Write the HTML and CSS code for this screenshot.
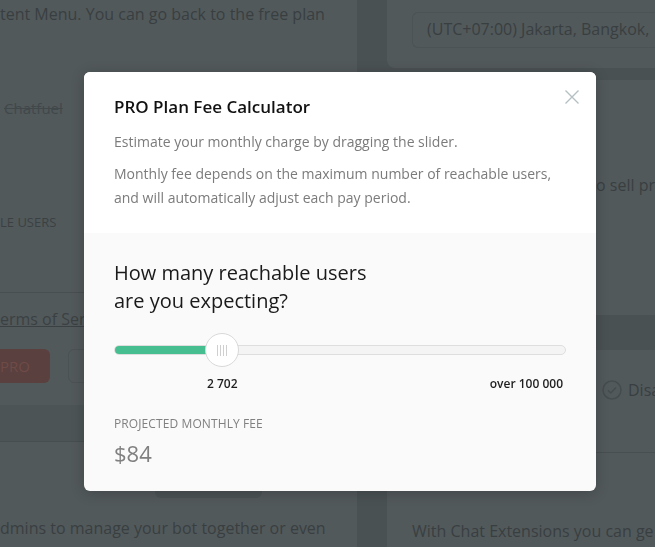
FILE: index.html
```html
<!DOCTYPE html>
<html lang="en">
<head>
  <meta charset="UTF-8">
  <meta name="viewport" content="width=device-width, initial-scale=1.0">
  <link rel="stylesheet" href="styles.css">
</head>
<body>
  <div id="page">
    <div class="col col-left">
      <section class="card card-plan">
        <p class="bg-text">tent Menu. You can go back to the free plan</p>
        <p class="old-brand">Chatfuel</p>
        <p class="caps">LE USERS</p>
        <div class="rule"></div>
        <p class="terms"><u>erms of Servic</u></p>
        <div class="btn-row">
          <span class="btn btn-pro">PRO</span>
          <span class="btn btn-ghost"></span>
        </div>
      </section>
      <div class="band"></div>
      <section class="card card-admins">
        <span class="btn btn-hidden"></span>
        <p class="bg-text">dmins to manage your bot together or even</p>
      </section>
    </div>

    <div class="col col-right">
      <section class="card card-tz">
        <div class="select">(UTC+07:00) Jakarta, Bangkok,</div>
      </section>
      <section class="card card-pay">
        <p class="bg-text sell">o sell pr</p>
      </section>
      <section class="card card-ext">
        <div class="check-row">
          <span class="check">
            <svg width="20" height="20" viewBox="0 0 20 20"><circle cx="10" cy="10" r="9" fill="none" stroke="#454c4e" stroke-width="1.5"/><path d="M6 10.2l2.8 2.8 5.2-5.6" fill="none" stroke="#454c4e" stroke-width="1.5"/></svg>
          </span>
          <span class="bg-text">Disa</span>
        </div>
        <div class="rule"></div>
        <p class="bg-text ext">With Chat Extensions you can ge</p>
      </section>
    </div>
  </div>

  <div id="overlay">
    <div class="modal">
      <div class="modal-head">
        <button class="close" aria-label="Close">
          <svg width="16" height="16" viewBox="0 0 16 16"><path d="M1.5 1.5L14.5 14.5M14.5 1.5L1.5 14.5" stroke="#b5c0c3" stroke-width="1.4"/></svg>
        </button>
        <h2 class="modal-title">PRO Plan Fee Calculator</h2>
        <p class="modal-desc">Estimate your monthly charge by dragging the slider.</p>
        <p class="modal-desc second">Monthly fee depends on the maximum number of reachable users, and will automatically adjust each pay period.</p>
      </div>
      <div class="modal-body">
        <h3 class="question">How many reachable users<br>are you expecting?</h3>
        <div class="slider">
          <div class="track">
            <div class="fill" style="width: 108px"></div>
          </div>
          <div class="thumb" style="left: 91px">
            <span></span><span></span><span></span><span></span>
          </div>
        </div>
        <div class="slider-labels">
          <span class="value" style="left: 93px">2 702</span>
          <span class="max">over 100 000</span>
        </div>
        <p class="fee-label">PROJECTED MONTHLY FEE</p>
        <p class="fee">$84</p>
      </div>
    </div>
  </div>
</body>
</html>
```

FILE: styles.css
```css
body {
  margin: 0;
  background: #4a5153;
  font-family: 'Open Sans', sans-serif;
  overflow: hidden;
}

p {
  margin: 0;
}

#page {
  display: grid;
  grid-template-columns: 357px 268px;
  column-gap: 30px;
  height: 547px;
  overflow: hidden;
}

.col {
  display: flex;
  flex-direction: column;
}

.card {
  background: #52595b;
}

.bg-text {
  color: #393f41;
  font-size: 16px;
  line-height: 24px;
  white-space: nowrap;
}

/* left column */
.card-plan {
  padding-top: 2px;
  height: 403px;
}

.old-brand {
  color: #41484a;
  font-size: 15px;
  line-height: 20px;
  text-decoration: line-through;
  margin: 72px 0 0 4px;
}

.caps {
  color: #3b4143;
  font-size: 13px;
  line-height: 18px;
  margin-top: 95px;
}

.rule {
  height: 1px;
  background: #484f51;
}

.card-plan .rule {
  margin-top: 61px;
}

.terms {
  width: 84px;
  overflow: hidden;
  color: #3b4143;
  font-size: 16px;
  line-height: 24px;
  margin-top: 14px;
  white-space: nowrap;
}

.btn-row {
  display: flex;
  gap: 18px;
  margin-top: 18px;
}

.btn {
  display: block;
  height: 34px;
  border-radius: 6px;
  box-sizing: border-box;
}

.btn-pro {
  width: 50px;
  background: #5a403e;
  color: #6f4b48;
  font-size: 15px;
  line-height: 34px;
  text-align: right;
  padding-right: 25px;
  border-top-left-radius: 0;
  border-bottom-left-radius: 0;
}

.btn-ghost {
  width: 140px;
  border: 1px solid #4b5254;
}

.band {
  height: 36px;
  background: #4d5456;
  border-bottom: 1px solid #474e50;
}

.card-admins {
  flex: 1;
  padding-top: 16px;
}

.btn-hidden {
  width: 107px;
  margin-left: 155px;
  height: 40px;
  background: #4b5254;
}

.card-admins .bg-text {
  margin-top: 18px;
}

/* right column */
.card-tz {
  height: 68px;
  border-bottom-left-radius: 8px;
  padding: 12px 0 0 25px;
  box-sizing: border-box;
}

.select {
  height: 34px;
  border: 1px solid #4c5355;
  border-right: none;
  border-radius: 6px 0 0 6px;
  color: #393f41;
  font-size: 16px;
  line-height: 32px;
  padding-left: 14px;
  white-space: nowrap;
  overflow: hidden;
}

.card-pay {
  margin-top: 12px;
  height: 235px;
  padding: 93px 0 0 209px;
  box-sizing: border-box;
}

.card-ext {
  margin-top: 35px;
  flex: 1;
  padding: 28px 0 0 25px;
}

.check-row {
  display: flex;
  align-items: center;
  gap: 6px;
  margin-left: 190px;
}

.check svg {
  display: block;
}

.card-ext .rule {
  margin: 50px 0 0 18px;
}

.ext {
  margin-top: 66px;
}

/* modal */
#overlay {
  position: fixed;
  inset: 0;
  padding: 72px 0 0 84px;
}

.modal {
  position: relative;
  width: 512px;
  border-radius: 6px;
  overflow: hidden;
  background: #fafafa;
  box-shadow: 0 2px 14px rgba(0, 0, 0, 0.2);
}

.modal-head {
  background: #fff;
  padding: 24px 30px 23px;
}

.close {
  position: absolute;
  top: 17px;
  right: 16px;
  width: 16px;
  height: 16px;
  padding: 0;
  border: none;
  background: none;
  cursor: pointer;
}

.close svg {
  display: block;
}

.modal-title {
  margin: 0;
  font-size: 17px;
  font-weight: 600;
  line-height: 22px;
  color: #111;
}

.modal-desc {
  margin-top: 12px;
  font-size: 14px;
  line-height: 24px;
  color: #7b7b7b;
}

.modal-desc.second {
  margin-top: 8px;
}

.modal-body {
  padding: 26px 30px 23px;
}

.question {
  margin: 0;
  font-size: 20px;
  font-weight: 400;
  line-height: 28px;
  color: #1a1a1a;
}

.slider {
  position: relative;
  height: 34px;
  margin-top: 18px;
}

.track {
  position: absolute;
  left: 0;
  right: 0;
  top: 12px;
  height: 10px;
  box-sizing: border-box;
  border: 1px solid #dedede;
  border-radius: 5px;
  background: #f4f4f4;
  overflow: hidden;
}

.fill {
  height: 100%;
  margin: -1px 0 0 -1px;
  padding-bottom: 2px;
  background: #46be8f;
}

.thumb {
  position: absolute;
  top: 0;
  width: 34px;
  height: 34px;
  box-sizing: border-box;
  border: 1px solid #d9d9d9;
  border-radius: 50%;
  background: #fff;
  display: flex;
  align-items: center;
  justify-content: center;
  gap: 2px;
}

.thumb span {
  width: 1px;
  height: 11px;
  background: #cfcfcf;
}

.slider-labels {
  position: relative;
  height: 16px;
  margin-top: 9px;
  font-size: 12px;
  font-weight: 600;
  line-height: 16px;
  color: #1e1e1e;
}

.value {
  position: absolute;
  top: 0;
}

.max {
  position: absolute;
  top: 0;
  right: 3px;
}

.fee-label {
  margin-top: 24px;
  font-size: 12px;
  line-height: 16px;
  color: #808080;
  letter-spacing: 0.1px;
}

.fee {
  margin-top: 6px;
  font-size: 22px;
  line-height: 30px;
  color: #808080;
}
```
